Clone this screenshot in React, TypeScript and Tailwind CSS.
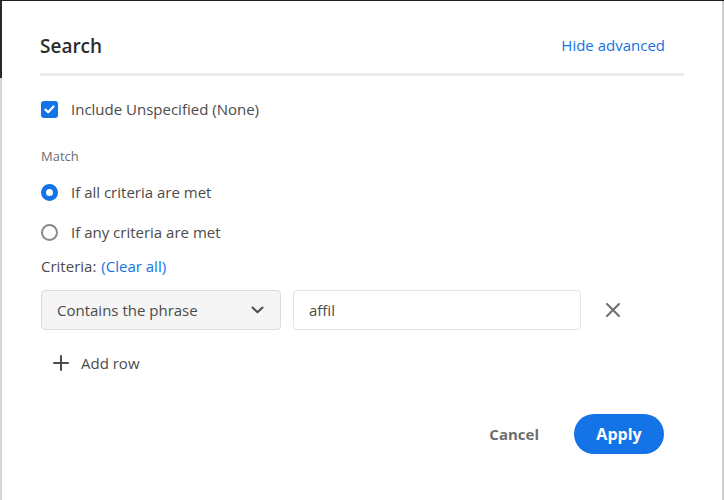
import { useState } from "react"

function Radio({ checked }: { checked: boolean }) {
	return checked ? (
		<span className="w-[17px] h-[17px] rounded-full border-[5px] border-[#1473e6] bg-white shrink-0" />
	) : (
		<span className="w-[17px] h-[17px] rounded-full border-[2.5px] border-[#8a8a8a] bg-white shrink-0" />
	)
}

export default function App() {
	const [all, setAll] = useState(true)

	return (
		<div
			className="w-[724px] h-[500px] flex flex-col bg-white text-[#4b4b4b] overflow-hidden"
			style={{ fontFamily: '"Open Sans", "Noto Sans", sans-serif' }}
		>
			{/* backdrop edge at top */}
			<div className="h-px bg-[#1f1f1f] shrink-0" />
			<div className="flex flex-1">
				{/* backdrop edge at left */}
				<div className="w-[2px] flex flex-col shrink-0">
					<div className="h-[77px] bg-[#2a2a2a]" />
					<div className="flex-1 bg-[#d6d6d6]" />
				</div>

				{/* Dialog body */}
				<div className="flex-1 flex flex-col pl-[38px] pr-[38px]">
					{/* Header */}
					<div className="mt-[23px] h-[44px] flex items-center justify-between">
						<h1 className="text-[19px] font-semibold text-[#2c2c2c] leading-7">Search</h1>
						<button className="mr-[19px] -mt-[2px] text-[15px] text-[#1473e6] leading-6">Hide advanced</button>
					</div>
					<div className="mt-[5px] h-[3px] bg-[#ececec]" />

					{/* Include unspecified */}
					<label className="mt-[17px] h-[32px] flex items-center gap-[13px] pl-px">
						<span className="w-[17px] h-[17px] rounded-[3px] bg-[#1473e6] flex items-center justify-center shrink-0">
							<svg width="11" height="9" viewBox="0 0 11 9" fill="none">
								<path d="M1.5 4.6 L4.2 7.2 L9.5 1.6" stroke="white" strokeWidth="2.2" strokeLinecap="round" strokeLinejoin="round" />
							</svg>
						</span>
						<span className="text-[15px] leading-6">Include Unspecified (None)</span>
					</label>

					{/* Match */}
					<div className="mt-[22px] h-[20px] flex items-center pl-px text-[13px] text-[#6e6e6e]">Match</div>

					<div className="mt-[9px] h-[32px] flex items-center gap-[13px] pl-px cursor-pointer" onClick={() => setAll(true)}>
						<Radio checked={all} />
						<span className="text-[15px] leading-6">If all criteria are met</span>
					</div>
					<div className="mt-[8px] h-[32px] flex items-center gap-[13px] pl-px cursor-pointer" onClick={() => setAll(false)}>
						<Radio checked={!all} />
						<span className="text-[15px] leading-6">If any criteria are met</span>
					</div>

					{/* Criteria */}
					<div className="mt-[6px] h-[24px] flex items-center pl-px text-[15px]">
						<span>Criteria:</span>
						<button className="ml-[5px] text-[#1473e6]">(Clear all)</button>
					</div>

					{/* Criteria row */}
					<div className="mt-[12px] h-[40px] flex items-center pl-px">
						<button className="w-[240px] h-[40px] rounded-[4px] border border-[#dcdcdc] bg-[#f5f5f5] flex items-center justify-between pl-[15px] pr-[16px] text-[15px]">
							<span>Contains the phrase</span>
							<svg width="13" height="8" viewBox="0 0 13 8" fill="none">
								<path d="M1.5 1.5 L6.5 6.3 L11.5 1.5" stroke="#4b4b4b" strokeWidth="2" strokeLinecap="round" strokeLinejoin="round" />
							</svg>
						</button>
						<div className="ml-[12px] w-[288px] h-[40px] rounded-[4px] border border-[#e3e3e3] bg-white flex items-center pl-[15px] text-[15px]">
							affil
						</div>
						<button className="ml-[16px] w-[32px] h-[32px] flex items-center justify-center">
							<svg width="16" height="16" viewBox="0 0 16 16" fill="none">
								<path d="M2 2 L14 14 M14 2 L2 14" stroke="#6e6e6e" strokeWidth="2" strokeLinecap="round" />
							</svg>
						</button>
					</div>

					{/* Add row */}
					<button className="mt-[17px] h-[32px] flex items-center gap-[12px] pl-[13px] text-[15px] w-fit">
						<svg width="16" height="16" viewBox="0 0 16 16" fill="none">
							<path d="M8 1 V15 M1 8 H15" stroke="#4b4b4b" strokeWidth="2" strokeLinecap="round" />
						</svg>
						<span>Add row</span>
					</button>

					{/* Footer */}
					<div className="mt-[35px] h-[40px] flex items-center justify-end gap-[20px] pr-[20px]">
						<button className="h-[40px] px-[15px] text-[15px] font-bold text-[#6e6e6e]">Cancel</button>
						<button className="w-[90px] h-[40px] rounded-full bg-[#1473e6] text-white text-[16px] font-bold">Apply</button>
					</div>
				</div>

				{/* backdrop edge at right */}
				<div className="w-[2px] bg-[#cfcfcf] shrink-0" />
			</div>
		</div>
	)
}
